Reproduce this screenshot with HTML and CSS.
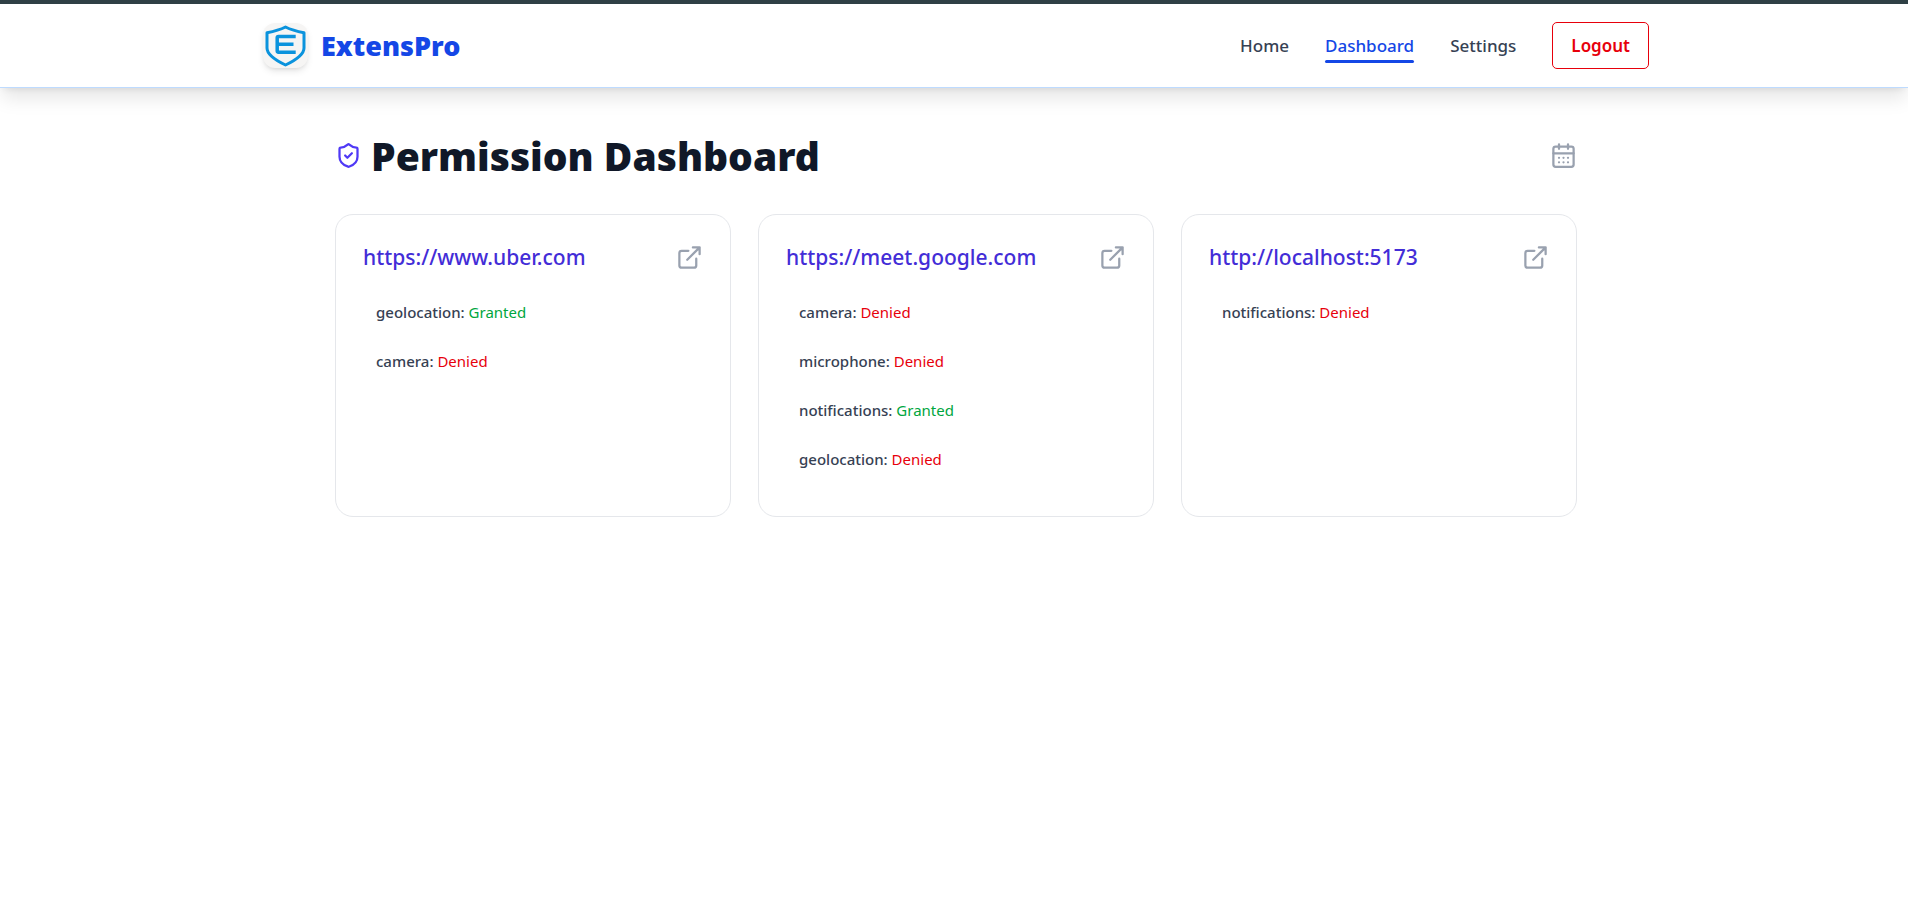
FILE: index.html
```html
<!DOCTYPE html>
<html lang="en">
<head>
<meta charset="utf-8">
<title>ExtensPro - Permission Dashboard</title>
<link rel="stylesheet" href="styles.css">
</head>
<body>
<svg class="sprite" aria-hidden="true">
  <symbol id="external" viewBox="0 0 24 24"><path d="M15 3h6v6M10 14 21 3M18 13v6a2 2 0 0 1-2 2H5a2 2 0 0 1-2-2V8a2 2 0 0 1 2-2h6"/></symbol>
</svg>
<header class="header">
  <div class="header-inner">
    <a class="brand" href="#">
      <svg class="logo" viewBox="0 0 45 45" aria-hidden="true">
        <path class="logo-shield" d="M22.500 4 C17.500 6.500 10.500 8.500 4 9.800V25c0 7 9 12.500 18.500 17C32 37.500 41 32 41 25V9.800C34.500 8.500 27.500 6.500 22.500 4Z"/>
        <path class="logo-mark" d="M32.700 13.500H15.500q-1.300 0-1.300 1.300v13q0 1.400 1.300 1.400H32.700M14.500 21.300H30.500"/>
      </svg>
      <span class="brand-name">ExtensPro</span>
    </a>
    <nav class="nav">
      <a class="nav-link" href="#">Home</a>
      <a class="nav-link active" href="#" aria-current="page">Dashboard</a>
      <a class="nav-link" href="#">Settings</a>
      <button class="logout" type="button">Logout</button>
    </nav>
  </div>
</header>
<main class="main">
  <div class="title-row">
    <div class="title">
      <svg class="icon icon-shield" viewBox="0 0 24 24" aria-hidden="true"><path d="M20 13c0 5-3.500 7.500-7.660 8.950a1 1 0 0 1-.67-.01C7.500 20.500 4 18 4 13V6a1 1 0 0 1 1-1c2 0 4.500-1.200 6.240-2.720a1.170 1.170 0 0 1 1.520 0C14.510 3.810 17 5 19 5a1 1 0 0 1 1 1z"/><path d="m9 12 2 2 4-4"/></svg>
      <h1>Permission Dashboard</h1>
    </div>
    <svg class="icon" viewBox="0 0 24 24" aria-hidden="true"><path d="M8 2v4M16 2v4M3 10h18M8 14h.01M12 14h.01M16 14h.01M8 18h.01M12 18h.01M16 18h.01"/><rect x="3" y="4" width="18" height="18" rx="2"/></svg>
  </div>
  <div class="cards">
    <section class="card">
      <div class="card-head"><h2>https://www.uber.com</h2><a href="https://www.uber.com" aria-label="Open https://www.uber.com"><svg class="icon"><use href="#external"/></svg></a></div>
      <ul>
        <li>geolocation: <span class="granted">Granted</span></li>
        <li>camera: <span class="denied">Denied</span></li>
      </ul>
    </section>
    <section class="card">
      <div class="card-head"><h2>https://meet.google.com</h2><a href="https://meet.google.com" aria-label="Open https://meet.google.com"><svg class="icon"><use href="#external"/></svg></a></div>
      <ul>
        <li>camera: <span class="denied">Denied</span></li>
        <li>microphone: <span class="denied">Denied</span></li>
        <li>notifications: <span class="granted">Granted</span></li>
        <li>geolocation: <span class="denied">Denied</span></li>
      </ul>
    </section>
    <section class="card">
      <div class="card-head"><h2>http://localhost:5173</h2><a href="http://localhost:5173" aria-label="Open http://localhost:5173"><svg class="icon"><use href="#external"/></svg></a></div>
      <ul>
        <li>notifications: <span class="denied">Denied</span></li>
      </ul>
    </section>
  </div>
</main>
</body>
</html>
```
FILE: styles.css
```css
* { box-sizing: border-box; margin: 0; padding: 0; }

body {
  min-height: 100vh;
  background: #fff;
  color: #364153;
  font-family: "Segoe UI", "Noto Sans", "Open Sans", sans-serif;
  font-size: 15px;
}

a { color: inherit; text-decoration: none; }

.sprite { position: absolute; width: 0; height: 0; }

.icon {
  display: block;
  flex: none;
  width: 27px;
  height: 27px;
  fill: none;
  stroke: #99a1af;
  stroke-width: 2;
  stroke-linecap: round;
  stroke-linejoin: round;
}

/* Header */
.header {
  border-top: 4px solid #2f4045;
  border-bottom: 1px solid #bedbff;
  background: #fff;
  box-shadow: 0 12px 18px -2px rgba(0, 0, 0, .1), 0 4px 7px -4px rgba(0, 0, 0, .1);
}

.header-inner {
  display: flex;
  align-items: center;
  justify-content: space-between;
  max-width: 1444px;
  margin: 0 auto;
  padding: 18px 27px 18px 31px;
}

.brand { display: flex; align-items: center; gap: 13px; }

.logo {
  width: 45px;
  height: 45px;
  border-radius: 12px;
  background: #f6f5f4;
  box-shadow: 0 4px 7px -1px rgba(0, 0, 0, .1), 0 2px 4px -2px rgba(0, 0, 0, .1);
  fill: none;
  stroke: #0b93dd;
}

.logo-shield { stroke-width: 3; stroke-linejoin: round; }
.logo-mark { stroke-width: 3.5; stroke-linejoin: round; }

.brand-name { color: #1447e6; font-size: 27px; font-weight: 900; line-height: 36px; }

.nav { display: flex; align-items: center; gap: 36px; font-size: 17px; font-weight: 500; line-height: 27px; }

.nav-link { padding: 4px 0; }
.nav-link.active { position: relative; color: #1447e6; }
.nav-link.active::after {
  content: "";
  position: absolute;
  left: 0;
  right: 0;
  bottom: 0;
  height: 3px;
  border-radius: 2px;
  background: #1447e6;
}

.logout {
  padding: 9px 18px;
  border: 1px solid #e7000b;
  border-radius: 5px;
  background: #fff;
  color: #e7000b;
  font: inherit;
  font-weight: 600;
}

/* Dashboard */
.main { max-width: 1300px; margin: 0 auto; padding: 45px 27px 45px 31px; }

.title-row { display: flex; align-items: center; justify-content: space-between; margin-bottom: 36px; }
.title { display: flex; align-items: center; gap: 9px; }
.icon-shield { stroke: #4f39f6; }

h1 { color: #101828; font-size: 39px; font-weight: 900; line-height: 45px; }

.cards { display: grid; grid-template-columns: repeat(3, 1fr); gap: 27px; }

.card { padding: 27px; border: 1px solid #e5e7eb; border-radius: 18px; }

.card-head { display: flex; align-items: center; justify-content: space-between; margin-bottom: 20px; }

h2 { color: #432dd7; font-size: 21px; font-weight: 500; line-height: 30px; }

ul { display: grid; gap: 9px; padding-bottom: 10px; list-style: none; }

li { padding: 9px 13px; font-weight: 500; line-height: 22px; }

li span { font-weight: 400; }

.granted { color: #00a63e; }
.denied { color: #e7000b; }
```
